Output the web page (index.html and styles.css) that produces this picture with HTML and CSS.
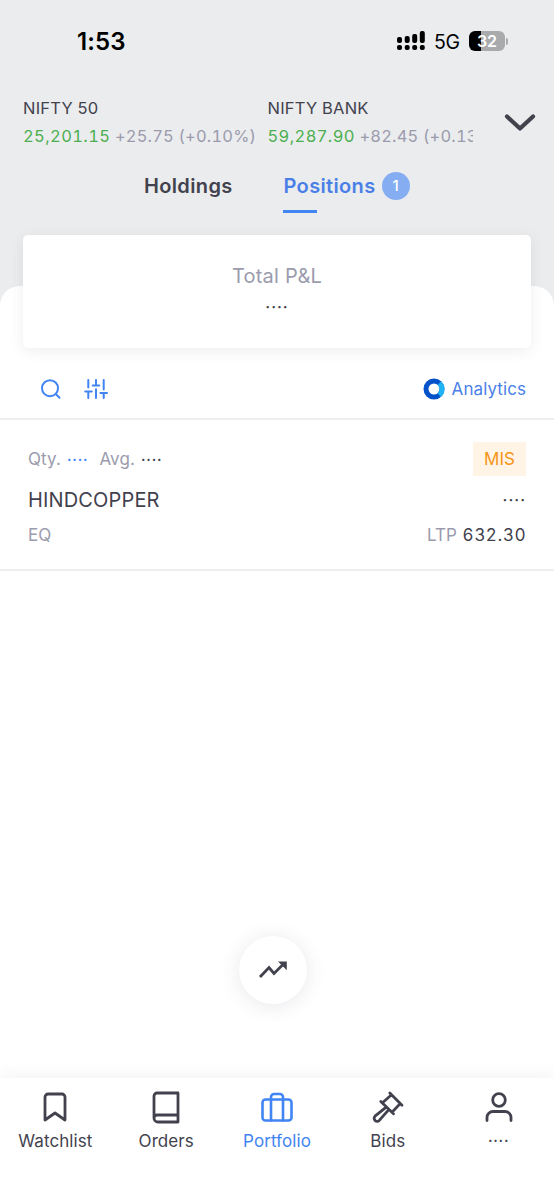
FILE: index.html
```html
<!DOCTYPE html>
<html lang="en">
<head>
<meta charset="utf-8">
<title>Portfolio</title>
<link rel="stylesheet" href="styles.css">
</head>
<body>
<div class="app">
  <header class="top">
    <div class="status">
      <span class="time">1:53</span>
      <div class="status-right">
        <svg class="signal" width="28" height="20" viewBox="0 0 28 20">
          <rect x="0" y="6" width="5" height="6" rx="2"/><rect x="7.7" y="5" width="5" height="7" rx="2"/><rect x="15.2" y="3" width="5" height="9" rx="2"/><rect x="22.8" y="0" width="5" height="12" rx="2"/>
          <rect x="0" y="14" width="5" height="5" rx="2"/><rect x="7.7" y="14" width="5" height="5" rx="2"/><rect x="15.2" y="14" width="5" height="5" rx="2"/><rect x="22.8" y="14" width="5" height="5" rx="2"/>
        </svg>
        <span class="net">5G</span>
        <div class="battery"><span>32</span></div>
        <i class="battery-cap"></i>
      </div>
    </div>
    <div class="ticker">
      <div class="index">
        <div class="index-name">NIFTY 50</div>
        <div class="index-val"><b>25,201.15</b> +25.75 (+0.10%)</div>
      </div>
      <div class="index clip">
        <div class="index-name bank">NIFTY BANK</div>
        <div class="index-val"><b>59,287.90</b> +82.45 (+0.13%)</div>
      </div>
      <svg class="chev" width="32" height="20" viewBox="0 0 32 20"><path d="M3 3.5 16 15.5 29 3.5"/></svg>
    </div>
    <nav class="tabs">
      <div class="tab">Holdings</div>
      <div class="tab active">Positions<span class="count">1</span></div>
    </nav>
  </header>
  <main class="sheet">
    <section class="card">
      <div class="card-title">Total P&amp;L</div>
      <div class="dots card-dots">····</div>
    </section>
    <div class="tools">
      <svg class="line-icon" width="22" height="22" viewBox="0 0 22 22"><circle cx="10" cy="10.200" r="8"/><path d="m16 16.200 3.500 3.500"/></svg>
      <svg class="line-icon filter" width="24" height="22" viewBox="0 0 24 22"><path d="M4.300 2v7.500M1.200 13.500h6.600M4.300 13.500V20M12 2v5.500M8.700 7.500h6.600M12 11.200V20M19.700 2v9.500M16.400 15h6.600M19.700 15V20"/></svg>
      <svg class="ring" width="22" height="22" viewBox="0 0 22 22"><circle cx="11" cy="11" r="8" stroke="#0352c9"/><path d="M16.4 5.1A8 8 0 0 1 16.2 17.1" stroke="#1fb2f5"/></svg>
      <span class="analytics">Analytics</span>
    </div>
    <section class="position">
      <div class="row r1">
        <span class="muted qty">Qty.</span><span class="dots small blue">····</span>
        <span class="muted avg">Avg.</span><span class="dots small">····</span>
        <span class="badge">MIS</span>
      </div>
      <div class="row r2"><span class="symbol">HINDCOPPER</span><span class="dots end">····</span></div>
      <div class="row r3"><span class="muted">EQ</span><span class="end ltp"><span class="muted">LTP</span> <span class="price">632.30</span></span></div>
    </section>
    <div class="fab"><svg width="30" height="20" viewBox="0 0 30 20"><path d="m2 17 9-9.5 5 6L25 4.500" fill="none" stroke="#42424e" stroke-width="2.8"/><path d="M20 1.500h8.800v8.800z" fill="#42424e"/></svg></div>
  </main>
  <nav class="bottom">
    <div class="item"><svg width="32" height="34" viewBox="0 0 32 34"><path d="M6 30V7a3 3 0 0 1 3-3h14a3 3 0 0 1 3 3v23l-10-7z"/></svg><span>Watchlist</span></div>
    <div class="item"><svg width="32" height="34" viewBox="0 0 32 34"><path d="M28 3H7a3 3 0 0 0-3 3v22a4 4 0 0 0 4 4h20zM4 28a3 3 0 0 1 3-3h21"/></svg><span>Orders</span></div>
    <div class="item on"><svg width="32" height="34" viewBox="0 0 32 34"><rect x="1.5" y="9.5" width="29" height="21" rx="3"/><path d="M10 30.500V7a3 3 0 0 1 3-3h6a3 3 0 0 1 3 3v23.500"/></svg><span>Portfolio</span></div>
    <div class="item"><svg width="32" height="34" viewBox="0 0 32 34"><path d="M17.800 3 30 15.200M8.800 11.500 21.500 23.800M10.500 12.800 19.500 4.700M20 22.200 28.200 13.600M14.500 16.800 3 26.200a3 3 0 0 0 4.300 4.200L17 19.400"/></svg><span>Bids</span></div>
    <div class="item"><svg width="32" height="34" viewBox="0 0 32 34"><circle cx="16" cy="10" r="6.300"/><path d="M4 30.500v-3a6 6 0 0 1 6-6h12a6 6 0 0 1 6 6v3"/></svg><span class="dots small">····</span></div>
  </nav>
</div>
</body>
</html>
```
FILE: styles.css
```css
* { box-sizing: border-box; }
body { margin: 0; background: #fff; font-family: Inter, sans-serif; font-weight: 375; color: #42424e; }
.app { width: 554px; height: 1200px; display: flex; flex-direction: column; overflow: hidden; }
.top { height: 286px; background: #ebeced; flex: none; }
.status { height: 84px; padding: 0 46px 2px 77px; display: flex; align-items: center; justify-content: space-between; color: #000; }
.time { font-size: 24px; font-weight: 600; letter-spacing: .1px; }
.status-right { display: flex; align-items: center; }
.signal { margin-right: 9px; }
.net { font-size: 19.5px; font-weight: 400; width: 35px; letter-spacing: -.3px; padding-top: 2px; }
.battery { width: 36px; height: 20px; border-radius: 6px; background: linear-gradient(90deg, #000 12px, #a9aaac 12px); color: #fff; font-size: 16px; font-weight: 600; line-height: 20px; text-align: center; }
.battery-cap { width: 2px; height: 7px; margin-left: 1px; border-radius: 0 2px 2px 0; background: #a9aaac; }
.ticker { display: flex; padding: 13px 18px 0 23px; height: 68px; align-items: flex-start; }
.index { width: 244.5px; flex: none; white-space: nowrap; }
.index.clip { width: 205px; overflow: hidden; }
.index-name { font-size: 16.5px; line-height: 22px; letter-spacing: .2px; }
.index-val { font-size: 16.5px; line-height: 24px; margin-top: 5px; color: #9b9bad; letter-spacing: .17px; font-variant-numeric: tabular-nums; }
.index-val b { font-weight: 375; color: #4caf50; letter-spacing: .4px; }
.chev { margin: 16px 0 0 auto; flex: none; }
.chev path { fill: none; stroke: #42424e; stroke-width: 4.2; stroke-linecap: round; stroke-linejoin: round; }
.tabs { display: flex; padding-left: 144px; height: 61px; }
.tab { font-size: 20px; font-weight: 600; letter-spacing: .35px; line-height: 28px; padding-top: 20px; width: 139px; display: flex; white-space: nowrap; }
.tab.active { color: #4a7fe8; width: 130px; padding-left: .5px; background: linear-gradient(#4184f3, #4184f3) 0 58px / 34px 3px no-repeat; }
.count { width: 28px; height: 28px; margin-left: 6px; flex: none; border-radius: 50%; background: #85adf2; color: #fff; font-size: 15px; font-weight: 500; text-align: center; letter-spacing: 0; }
.sheet { flex: 1; background: linear-gradient(#ebeced 24px, #fff 24px); display: flex; flex-direction: column; }
.sheet::before { content: ""; height: 24px; flex: none; margin-bottom: -24px; background: #fff; border-radius: 20px 20px 0 0; }
.card { margin: -51px 23px 0; height: 113px; border-radius: 5px; background: #fff; box-shadow: 0 3px 14px rgba(66,66,100,.09); position: relative; text-align: center; padding-top: 27px; flex: none; }
.card-title { color: #9b9bad; font-size: 20px; line-height: 28px; letter-spacing: .25px; }
.dots { font-size: 16px; font-weight: 500; letter-spacing: 1px; }
.dots.small { font-size: 15px; letter-spacing: .8px; }
.card-dots { margin-top: 7px; line-height: 20px; }
.tools { display: flex; height: 72px; align-items: center; padding: 12px 28px 0 40px; border-bottom: 2px solid #eeeeef; flex: none; }
.line-icon { fill: none; stroke: #4184f3; stroke-width: 2; stroke-linecap: round; }
.filter { margin-left: 22px; }
.ring { margin-left: auto; margin-right: 7px; fill: none; stroke-width: 5; }
.analytics { font-size: 17px; color: #4a7fe8; letter-spacing: .08px; }
.position { height: 151px; padding: 22px 28px 0; border-bottom: 2px solid #eeeeef; flex: none; }
.row { display: flex; align-items: center; white-space: nowrap; }
.r1 { height: 34px; font-size: 17px; }
.r2 { height: 48px; font-size: 20px; }
.r3 { height: 22px; font-size: 17px; }
.muted { color: #9b9bad; }
.qty, .avg { letter-spacing: .1px; margin-right: 6px; }
.avg { margin-left: 11px; }
.blue { color: #4184f3; }
.badge { margin-left: auto; width: 53px; height: 34px; line-height: 34px; text-align: center; background: #fff4e6; color: #f59416; }
.symbol { letter-spacing: .15px; }
.end { margin-left: auto; }
.ltp .muted { letter-spacing: .1px; margin-right: 1px; }
.price { letter-spacing: 1.1px; margin-right: -.5px; }
.fab { width: 68px; height: 68px; margin: 365px 0 0 239px; border-radius: 50%; background: #fff; box-shadow: 0 2px 20px rgba(66,66,100,.12); display: flex; align-items: center; justify-content: center; flex: none; }
.bottom { display: flex; height: 122px; background: #fff; box-shadow: 0 -4px 14px rgba(66,66,100,.05); flex: none; }
.item { flex: 1; display: flex; flex-direction: column; align-items: center; padding-top: 12px; font-size: 17px; letter-spacing: .08px; }
.item svg { fill: none; stroke: #42424e; stroke-width: 2.8; stroke-linejoin: round; stroke-linecap: round; }
.item span { line-height: 22px; margin-top: 6px; }
.item.on { color: #4184f3; }
.item.on svg { stroke: #4184f3; stroke-width: 2.6; }
```
